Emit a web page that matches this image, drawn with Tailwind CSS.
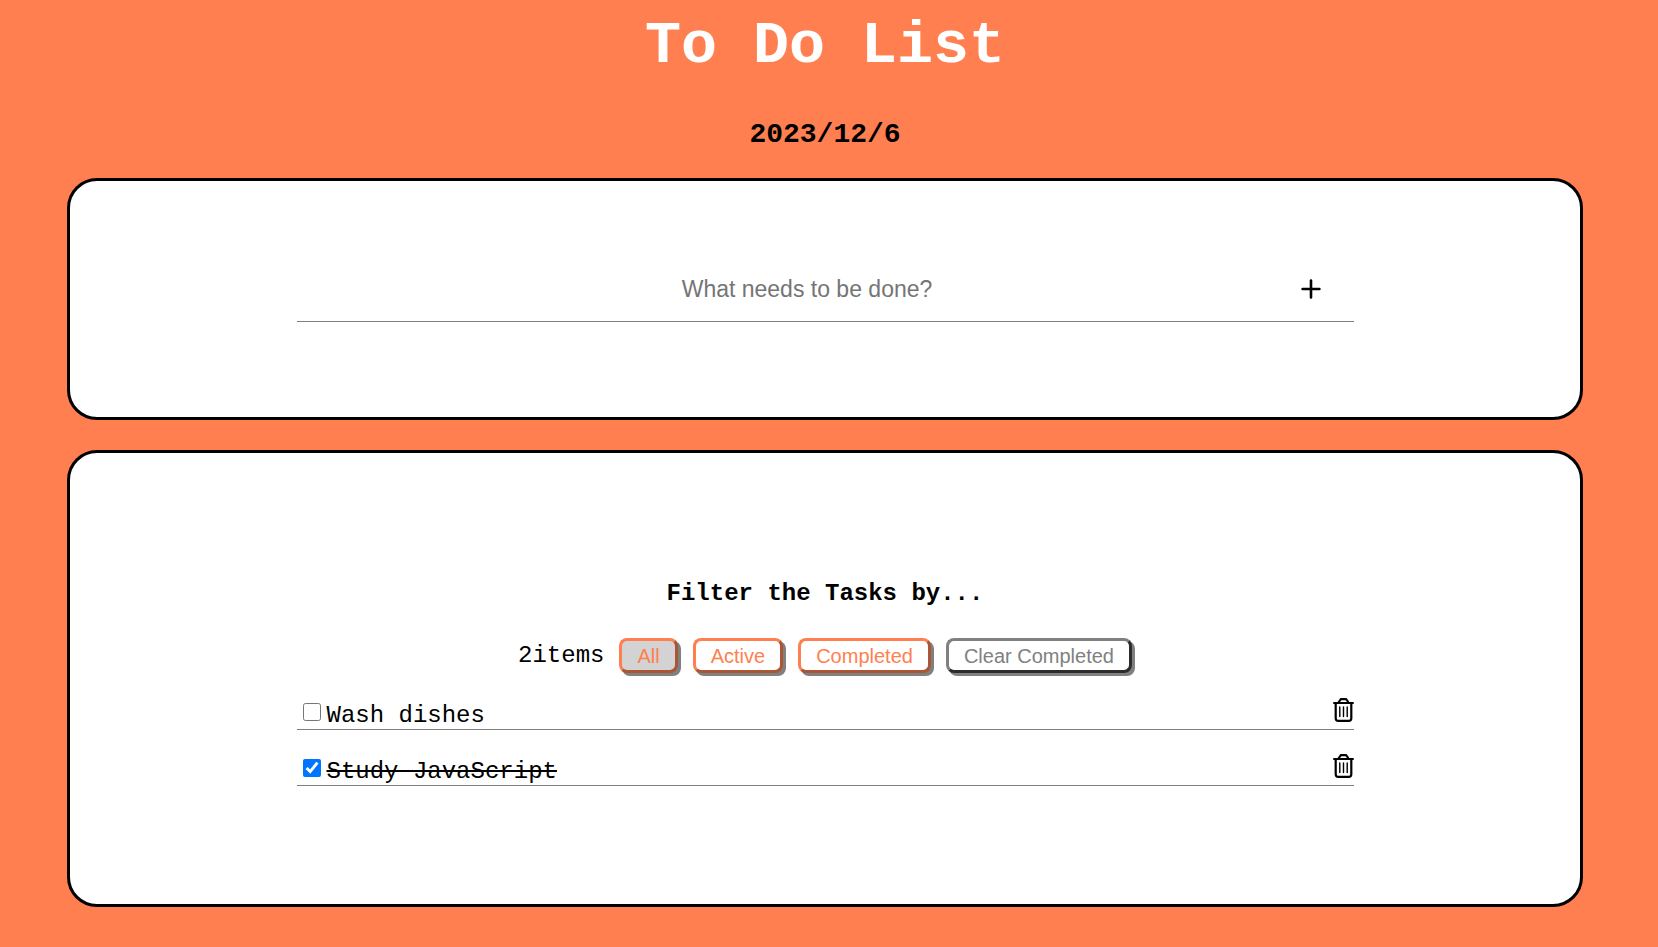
<!DOCTYPE html>
<html lang="en">
<head>
<meta charset="utf-8">
<meta name="viewport" content="width=device-width, initial-scale=1">
<title>To Do List</title>
<script src="https://cdn.jsdelivr.net/npm/@tailwindcss/browser@4"></script>
</head>
<body class="min-h-screen bg-[#ff7f50] pr-[75px] pl-[67px] pb-10 text-black font-['Courier_New','Liberation_Mono',monospace]">
  <header class="text-center font-bold">
    <h1 class="pt-2.5 text-[60px] leading-[72px] text-white">To Do List</h1>
    <h2 class="pt-9 pb-[26px] text-[28px] leading-[34px]">2023/12/6</h2>
  </header>

  <main class="flex flex-col gap-[30px]">
    <section class="rounded-[30px] border-3 border-black bg-white pt-[74px] pb-[95px]">
      <form class="mx-auto flex w-[70%] items-center gap-[14px] border-b border-[#808080] px-8 pt-4 pb-3.5">
        <input type="text" aria-label="New task" placeholder="What needs to be done?" class="h-9 min-w-0 flex-1 text-center font-['Liberation_Sans',sans-serif] text-[23px] text-black outline-none placeholder:text-[#757575]">
        <button type="button" aria-label="Add task">
          <svg class="size-[22px]" viewBox="0 0 22 22" fill="none" stroke="currentColor" stroke-width="2.6" stroke-linecap="round"><path d="M11 2.600v16.800M2.600 11h16.800"/></svg>
        </button>
      </form>
    </section>

    <section class="rounded-[30px] border-3 border-black bg-white pt-[125px] pb-[118px]">
      <h3 class="text-center text-[24px] leading-8 font-bold">Filter the Tasks by...</h3>
      <div class="mt-7 flex items-center justify-center gap-[15px]">
        <span class="text-[24px] leading-8">2items</span>
        <button type="button" aria-pressed="true" class="h-[35px] rounded-lg border-3 border-[#ff7f50] bg-[#d3d3d3] px-[15px] font-['Liberation_Sans',sans-serif] text-[20px] leading-7 text-[#ff7f50] shadow-[3px_3px_0_#808080] [border-style:outset]">All</button>
        <button type="button" class="h-[35px] rounded-lg border-3 border-[#ff7f50] bg-white px-[15px] font-['Liberation_Sans',sans-serif] text-[20px] leading-7 text-[#ff7f50] shadow-[3px_3px_0_#808080] [border-style:outset]">Active</button>
        <button type="button" class="h-[35px] rounded-lg border-3 border-[#ff7f50] bg-white px-[15px] font-['Liberation_Sans',sans-serif] text-[20px] leading-7 text-[#ff7f50] shadow-[3px_3px_0_#808080] [border-style:outset]">Completed</button>
        <button type="button" class="h-[35px] rounded-lg border-3 border-[#808080] bg-white px-[15px] font-['Liberation_Sans',sans-serif] text-[20px] leading-7 text-[#808080] shadow-[3px_3px_0_#808080] [border-style:outset]">Clear Completed</button>
      </div>

      <ul class="mx-auto mt-[21px] flex w-[70%] flex-col gap-5">
        <li class="flex h-9 items-start border-b border-[#808080] pl-1.5">
          <input id="task-1" type="checkbox" class="mt-[9px] size-[18px]">
          <label for="task-1" class="ml-1.5 pt-1.5 text-[24px] leading-8">Wash dishes</label>
          <button type="button" aria-label="Delete Wash dishes" class="mt-1 ml-auto">
            <svg class="h-6 w-[21px]" viewBox="0 0 21 24" fill="none" stroke="currentColor" stroke-width="2.200" stroke-linecap="round" stroke-linejoin="round"><path d="M1.100 5h18.800M5.500 4.500 7.200 2Q7.600 1.200 8.500 1.200h4Q13.400 1.200 13.800 2L15.500 4.500"/><path d="M2.700 5.200V20.200Q2.700 22.800 5.300 22.800H15.700Q18.300 22.800 18.300 20.200V5.200"/><path stroke-width="1.400" d="M6.800 9v9.500M10.500 9v9.500M14.200 9v9.500"/></svg>
          </button>
        </li>
        <li class="flex h-9 items-start border-b border-[#808080] pl-1.5">
          <input id="task-2" type="checkbox" checked class="mt-[9px] size-[18px]">
          <label for="task-2" class="ml-1.5 pt-1.5 text-[24px] leading-8 line-through decoration-2">Study JavaScript</label>
          <button type="button" aria-label="Delete Study JavaScript" class="mt-1 ml-auto">
            <svg class="h-6 w-[21px]" viewBox="0 0 21 24" fill="none" stroke="currentColor" stroke-width="2.200" stroke-linecap="round" stroke-linejoin="round"><path d="M1.100 5h18.800M5.500 4.500 7.200 2Q7.600 1.200 8.500 1.200h4Q13.400 1.200 13.800 2L15.500 4.500"/><path d="M2.700 5.200V20.200Q2.700 22.800 5.300 22.800H15.700Q18.300 22.800 18.300 20.200V5.200"/><path stroke-width="1.400" d="M6.800 9v9.500M10.500 9v9.500M14.200 9v9.500"/></svg>
          </button>
        </li>
      </ul>
    </section>
  </main>
</body>
</html>
